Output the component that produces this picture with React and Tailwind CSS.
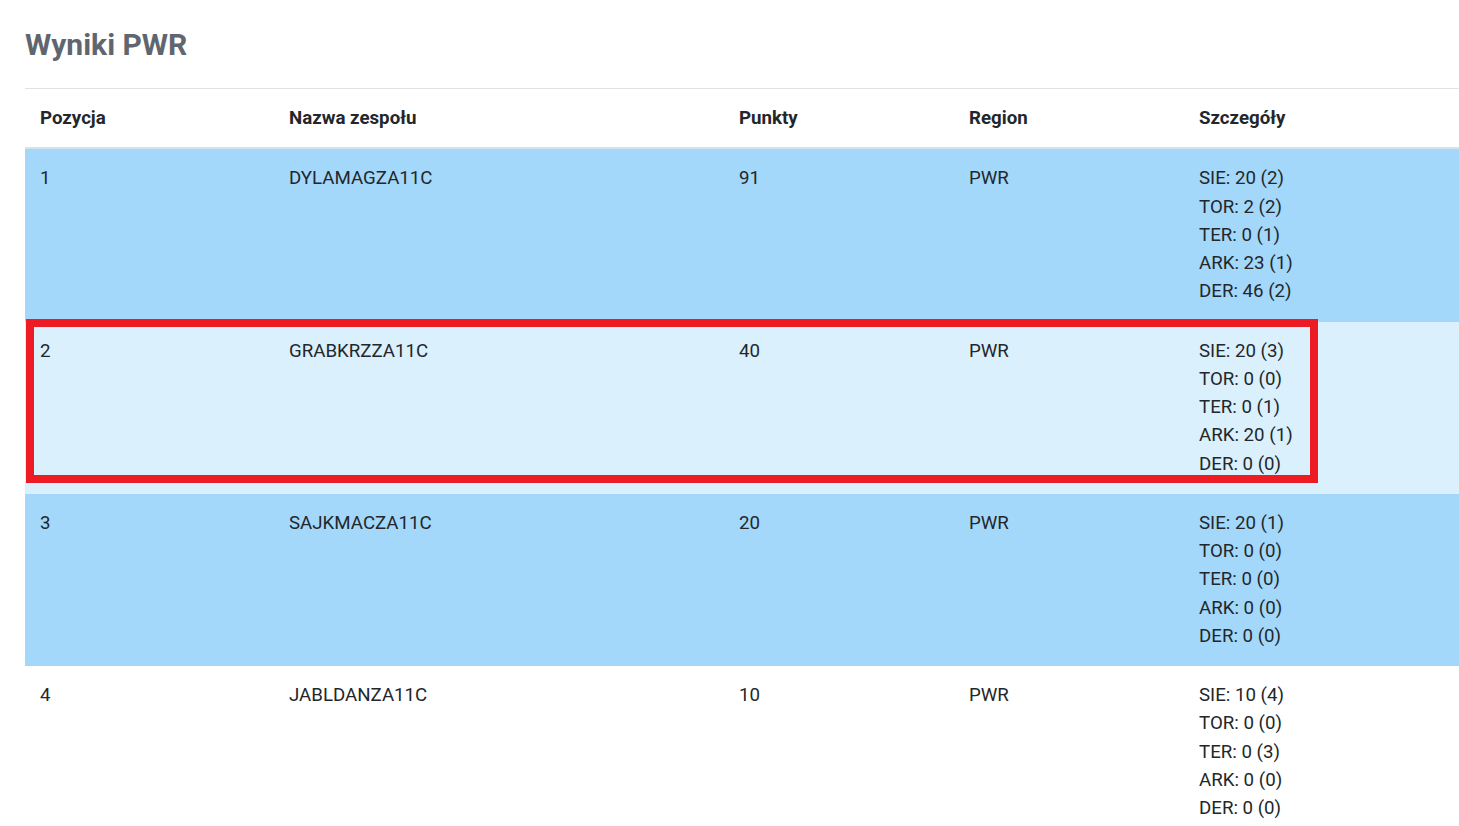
const rows = [
  { pos: 1, name: 'DYLAMAGZA11C', points: 91, region: 'PWR', details: ['SIE: 20 (2)', 'TOR: 2 (2)', 'TER: 0 (1)', 'ARK: 23 (1)', 'DER: 46 (2)'], bg: 'bg-[#a3d8fb]' },
  { pos: 2, name: 'GRABKRZZA11C', points: 40, region: 'PWR', details: ['SIE: 20 (3)', 'TOR: 0 (0)', 'TER: 0 (1)', 'ARK: 20 (1)', 'DER: 0 (0)'], bg: 'bg-[#dbf0fd]' },
  { pos: 3, name: 'SAJKMACZA11C', points: 20, region: 'PWR', details: ['SIE: 20 (1)', 'TOR: 0 (0)', 'TER: 0 (0)', 'ARK: 0 (0)', 'DER: 0 (0)'], bg: 'bg-[#a3d8fb]' },
  { pos: 4, name: 'JABLDANZA11C', points: 10, region: 'PWR', details: ['SIE: 10 (4)', 'TOR: 0 (0)', 'TER: 0 (3)', 'ARK: 0 (0)', 'DER: 0 (0)'], bg: 'bg-white' },
];

export default function App() {
  return (
    <div className="min-h-screen bg-white pl-[25px] pt-[27px] text-[#23272b]" style={{ fontFamily: 'Roboto, "Liberation Sans", sans-serif' }}>
      <h2 className="text-[30px] font-bold leading-[36px] text-[#5f6670] mb-[25px]">Wyniki PWR</h2>
      <div className="relative">
        <table className="w-full border-collapse table-fixed text-[18.7px] leading-[28.25px]">
          <colgroup>
            <col className="w-[249px]" />
            <col className="w-[450px]" />
            <col className="w-[230px]" />
            <col className="w-[230px]" />
            <col />
          </colgroup>
          <thead>
            <tr className="border-t border-[#dee2e6] border-b-2 border-b-[#d3e3ee]">
              <th className="text-left font-bold px-[15px] py-[15px] align-top">Pozycja</th>
              <th className="text-left font-bold px-[15px] py-[15px] align-top">Nazwa zespołu</th>
              <th className="text-left font-bold px-[15px] py-[15px] align-top">Punkty</th>
              <th className="text-left font-bold px-[15px] py-[15px] align-top">Region</th>
              <th className="text-left font-bold px-[15px] py-[15px] align-top">Szczegóły</th>
            </tr>
          </thead>
          <tbody>
            {rows.map((r) => (
              <tr key={r.pos} className={r.bg}>
                <td className="px-[15px] pt-[15px] pb-[16px] align-top">{r.pos}</td>
                <td className="px-[15px] pt-[15px] pb-[16px] align-top">{r.name}</td>
                <td className="px-[15px] pt-[15px] pb-[16px] align-top">{r.points}</td>
                <td className="px-[15px] pt-[15px] pb-[16px] align-top">{r.region}</td>
                <td className="px-[15px] pt-[15px] pb-[16px] align-top">
                  {r.details.map((d) => (
                    <div key={d}>{d}</div>
                  ))}
                </td>
              </tr>
            ))}
          </tbody>
        </table>
        <div className="pointer-events-none absolute left-[1px] top-[231px] w-[1292px] h-[164px] border-[8px] border-[#ed1c24]" />
      </div>
    </div>
  );
}
